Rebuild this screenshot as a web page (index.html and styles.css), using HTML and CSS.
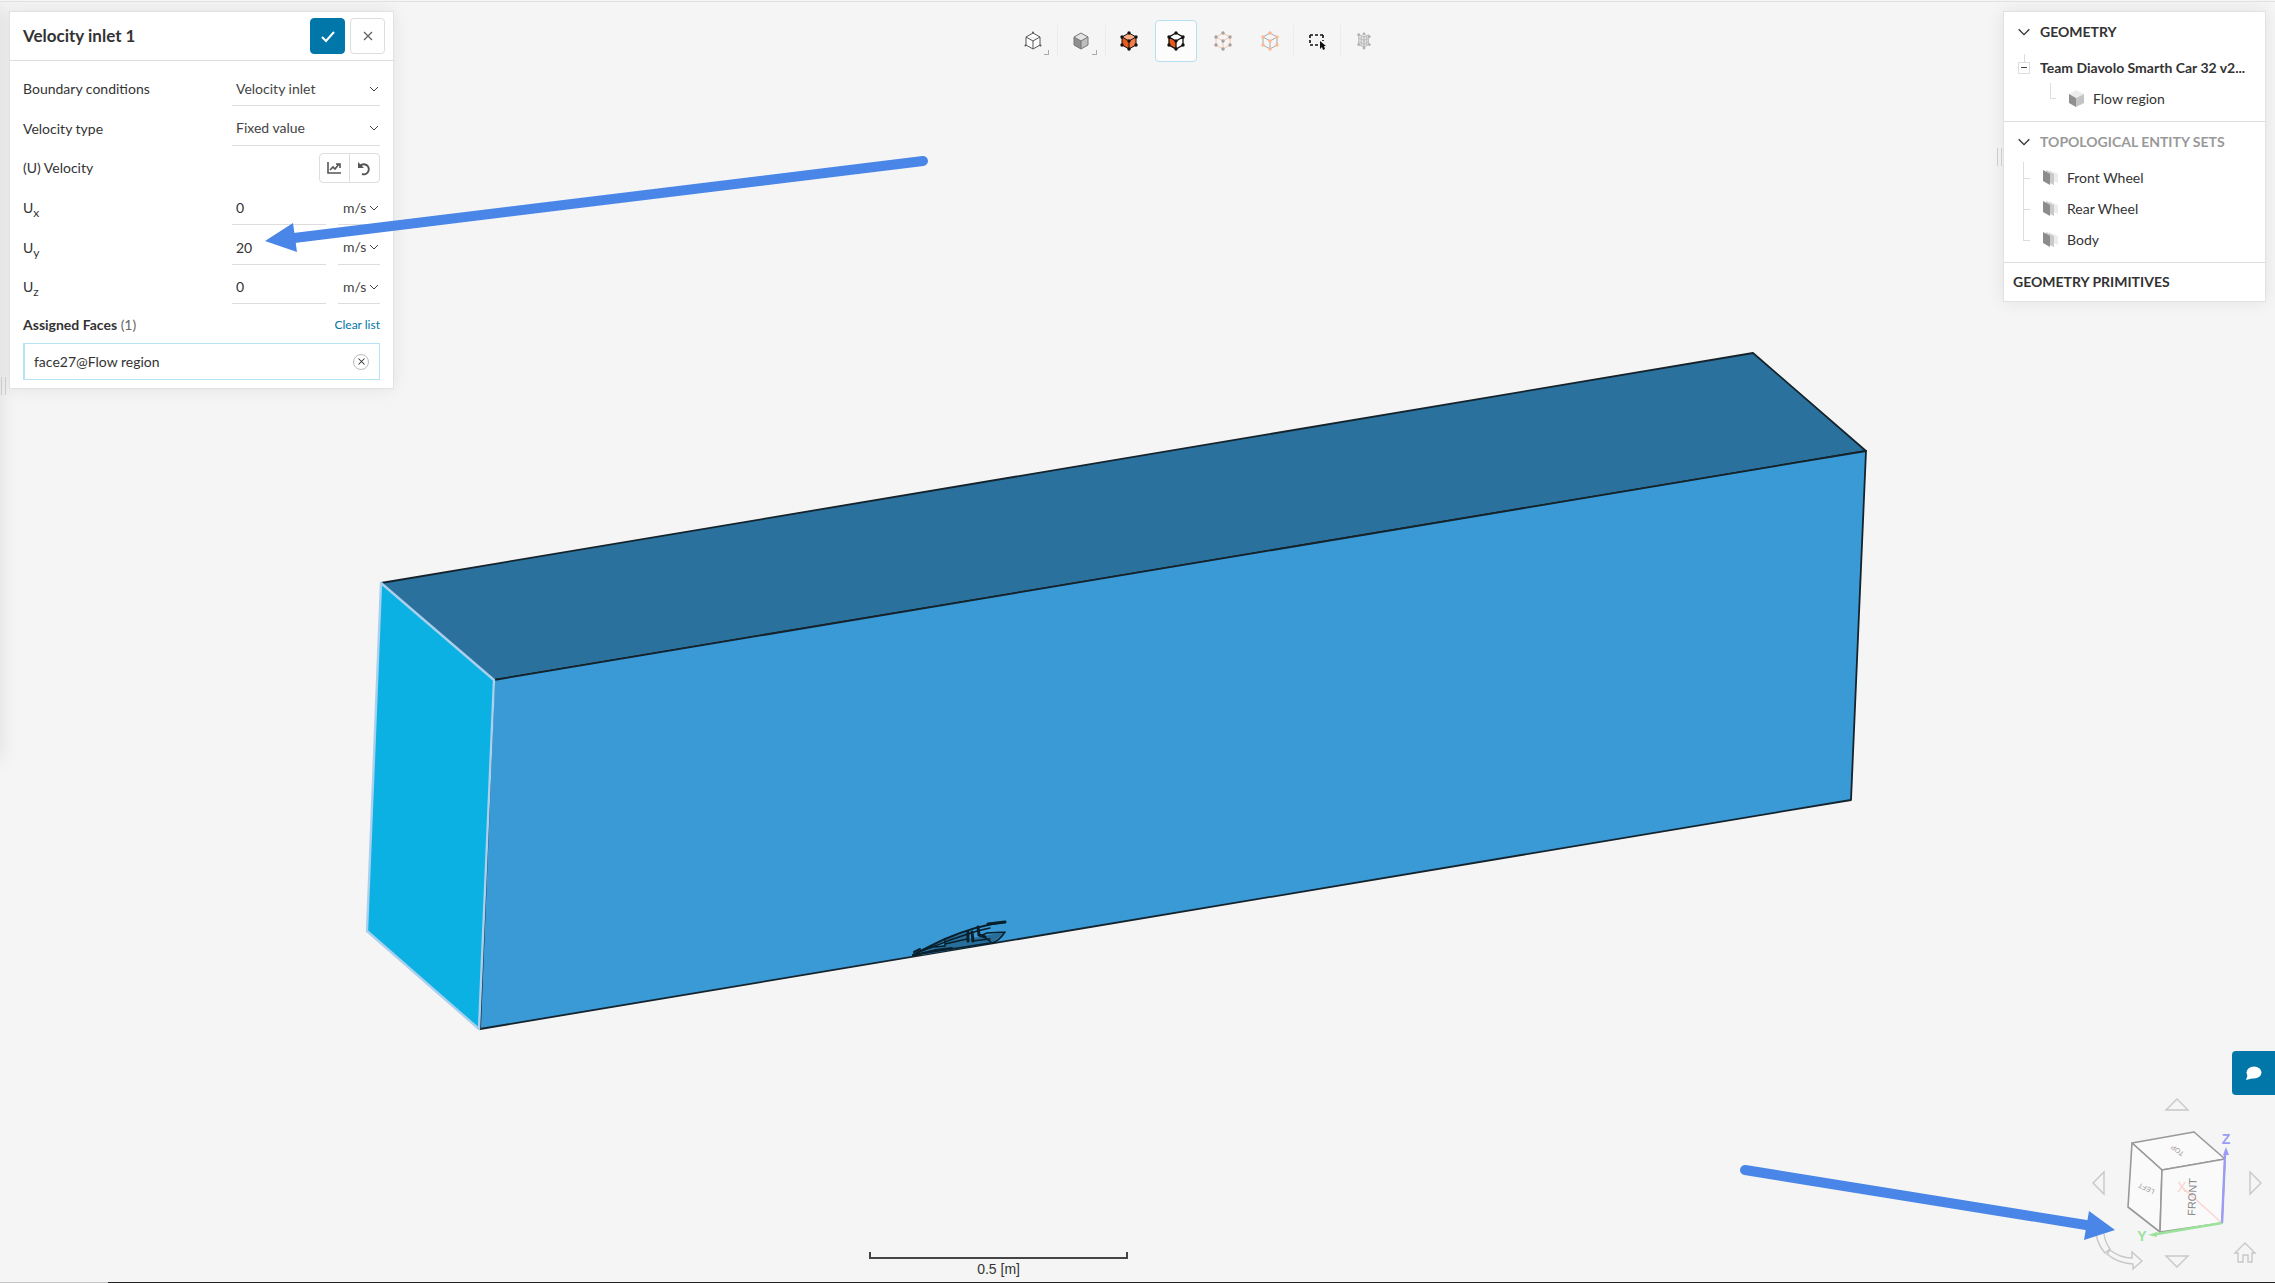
FILE: index.html
```html
<!DOCTYPE html>
<html lang="en">
<head>
<meta charset="utf-8">
<title>Velocity inlet 1</title>
<meta name="viewport" content="width=device-width, initial-scale=1">
<link rel="stylesheet" href="styles.css">
</head>
<body>
<svg class="symbols" aria-hidden="true">
  <symbol id="chevron" viewBox="0 0 12 12"><path d="M2 4l4 4 4-4" fill="none" stroke="currentColor"/></symbol>
  <symbol id="cross" viewBox="0 0 12 12"><path d="M2 2l8 8M10 2l-8 8" fill="none" stroke="currentColor" stroke-width="1.4"/></symbol>
  <symbol id="faces" viewBox="0 0 17 17"><path d="M7 1l9 4v9l-9-4z" fill="#ececec"/><path d="M4 1l8 4v11l-8-4z" fill="#c9c9c9"/><path d="M1 1l7 4v11l-7-4z" fill="#8c8c8c"/></symbol>
</svg>
<main class="workspace">
  <svg class="scene" viewBox="0 0 2275 1283" preserveAspectRatio="xMidYMid slice" role="img" aria-label="Flow region model">
    <g stroke="#14232c" stroke-width="1.8" stroke-linejoin="round">
      <path d="M381 583L1753 353l113 98L494 680z" fill="#2b719d"/>
      <path d="M494 680L1866 451l-15 349L480 1029z" fill="#3a9ad6"/>
    </g>
    <path d="M381 583l113 97-15 349-112-98z" fill="#0bb1e3" stroke="#a9d0ee" stroke-width="2.4" stroke-linejoin="round"/>
    <g stroke="#081f2c" fill="none" stroke-linecap="round">
      <path d="M915 955L945 944l22-5 38-7-13 11-70 12zM946 939l21-7 2 8-23 5z" fill="#286e9b" stroke="none"/>
      <path d="M913 955Q932 945 945 939Q978 925 1005 922" stroke-width="2"/>
      <path d="M988 924l17-2" stroke-width="3"/>
      <path d="M930 948L950 940L977 931L990 928" stroke-width="1.5"/>
      <path d="M913 955L990 943M1005 932Q999 941 992 943L986 938M1005 932L987 933L980 936M972 941L990 939" stroke-width="1.6"/>
      <path d="M968 932v9M972 932l1 9M978 927l1 8 6 2" stroke-width="3"/>
      <path d="M945 939v7l-10 1M945 944l22-5M922 951l14-5" stroke-width="1.5"/>
      <path d="M914 952l6-3M914 955l22-5 16-2" stroke-width="2"/>
    </g>
  </svg>

  <div class="top">
    <form class="panel settings" aria-label="Velocity inlet 1">
      <header class="settings-head">
        <h1>Velocity inlet 1</h1>
        <button class="square primary" type="button" aria-label="Apply"><svg width="17" height="17" viewBox="0 0 17 17"><path d="M3 9l4 4 8-9" fill="none" stroke="#fff" stroke-width="2"/></svg></button>
        <button class="square" type="button" aria-label="Close"><svg width="12" height="12"><use href="#cross"/></svg></button>
      </header>
      <div class="settings-body">
        <div class="row">
          <label for="bc">Boundary conditions</label>
          <span class="pick wide"><select id="bc"><option>Velocity inlet</option></select><svg width="12" height="12"><use href="#chevron"/></svg></span>
        </div>
        <div class="row">
          <label for="vt">Velocity type</label>
          <span class="pick wide"><select id="vt"><option>Fixed value</option></select><svg width="12" height="12"><use href="#chevron"/></svg></span>
        </div>
        <div class="row">
          <span class="grow">(U) Velocity</span>
          <span class="pair">
            <button type="button" aria-label="Plot"><svg width="15" height="14" viewBox="0 0 15 14"><path d="M1 1v11h13M3 9l3-3 2 2 4-5M9 3h4v4" fill="none" stroke="#555" stroke-width="1.6"/></svg></button>
            <button type="button" aria-label="Reset"><svg width="15" height="15" viewBox="0 0 15 15"><path d="M3 5a5 5 0 1 1 2 8" fill="none" stroke="#555" stroke-width="2"/><path d="M1 1v6h6z" fill="#555"/></svg></button>
          </span>
        </div>
        <div class="row">
          <label for="ux">U<sub>x</sub></label>
          <input class="value" id="ux" type="text" value="0">
          <span class="pick unit"><select aria-label="Unit of Ux"><option>m/s</option></select><svg width="12" height="12"><use href="#chevron"/></svg></span>
        </div>
        <div class="row">
          <label for="uy">U<sub>y</sub></label>
          <input class="value" id="uy" type="text" value="20">
          <span class="pick unit"><select aria-label="Unit of Uy"><option>m/s</option></select><svg width="12" height="12"><use href="#chevron"/></svg></span>
        </div>
        <div class="row">
          <label for="uz">U<sub>z</sub></label>
          <input class="value" id="uz" type="text" value="0">
          <span class="pick unit"><select aria-label="Unit of Uz"><option>m/s</option></select><svg width="12" height="12"><use href="#chevron"/></svg></span>
        </div>
        <div class="row assigned">
          <span class="grow"><b>Assigned Faces</b> <span class="count">(1)</span></span>
          <a class="clear" href="#">Clear list</a>
        </div>
        <div class="face">
          <span>face27@Flow region</span>
          <button type="button" aria-label="Remove face27"><svg width="9" height="9"><use href="#cross"/></svg></button>
        </div>
      </div>
    </form>

    <div class="toolbar" role="toolbar" aria-label="View and selection">
      <button class="tool menu" type="button" aria-label="Render mode"><svg width="18" height="20" viewBox="0 0 18 20"><path d="M9 2l7 4v8l-7 4-7-4V6zM2 6l7 4 7-4M9 10v8" fill="#fff" stroke="#555"/><g fill="#555"><circle cx="9" cy="1.500" r="1"/><circle cx="1.500" cy="14.500" r="1"/><circle cx="16.500" cy="14.500" r="1"/></g></svg></button>
      <button class="tool menu ruled" type="button" aria-label="Shading"><svg width="18" height="20" viewBox="0 0 18 20"><path d="M9 2l7 4-7 4-7-4z" fill="#e3e3e3"/><path d="M2 6l7 4v8l-7-4z" fill="#8f8f8f"/><path d="M16 6l-7 4v8l7-4z" fill="#bdbdbd"/><path d="M9 2l7 4v8l-7 4-7-4V6zM2 6l7 4 7-4M9 10v8" fill="none" stroke="#777"/></svg></button>
      <button class="tool ruled" type="button" aria-label="Select volumes"><svg width="18" height="20" viewBox="0 0 18 20"><path d="M9 2l7 4-7 4-7-4z" fill="#ffab85"/><path d="M2 6l7 4v8l-7-4z" fill="#e8591c"/><path d="M16 6l-7 4v8l7-4z" fill="#f57c45"/><path d="M9 2l7 4v8l-7 4-7-4V6zM2 6l7 4 7-4M9 10v8" fill="none" stroke="#111"/><g fill="#111"><circle cx="9" cy="2" r="1.700"/><circle cx="2" cy="6" r="1.700"/><circle cx="16" cy="6" r="1.700"/><circle cx="9" cy="10" r="1.700"/><circle cx="2" cy="14" r="1.700"/><circle cx="16" cy="14" r="1.700"/><circle cx="9" cy="18" r="1.700"/></g></svg></button>
      <button class="tool active" type="button" aria-label="Select faces" aria-pressed="true"><svg width="18" height="20" viewBox="0 0 18 20"><path d="M2 6l7 4v8l-7-4z" fill="#e8591c"/><path d="M9 2l7 4v8l-7 4-7-4V6zM2 6l7 4 7-4M9 10v8" fill="none" stroke="#111" stroke-width="1.300"/><g fill="#111"><circle cx="9" cy="2" r="1.700"/><circle cx="2" cy="6" r="1.700"/><circle cx="16" cy="6" r="1.700"/><circle cx="9" cy="10" r="1.700"/><circle cx="2" cy="14" r="1.700"/><circle cx="16" cy="14" r="1.700"/><circle cx="9" cy="18" r="1.700"/></g></svg></button>
      <button class="tool" type="button" aria-label="Select edges"><svg width="18" height="20" viewBox="0 0 18 20"><path d="M9 2l7 4v8l-7 4-7-4V6zM2 6l7 4 7-4M9 10v8" fill="none" stroke="#f8c3aa"/><g fill="#a5a09e"><circle cx="9" cy="2" r="1.700"/><circle cx="2" cy="6" r="1.700"/><circle cx="16" cy="6" r="1.700"/><circle cx="9" cy="10" r="1.700"/><circle cx="2" cy="14" r="1.700"/><circle cx="16" cy="14" r="1.700"/><circle cx="9" cy="18" r="1.700"/></g></svg></button>
      <button class="tool" type="button" aria-label="Select vertices"><svg width="18" height="20" viewBox="0 0 18 20"><path d="M9 2l7 4v8l-7 4-7-4V6zM2 6l7 4 7-4M9 10v8" fill="none" stroke="#aaa"/><g fill="#fbb897"><circle cx="9" cy="2" r="1.700"/><circle cx="2" cy="6" r="1.700"/><circle cx="16" cy="6" r="1.700"/><circle cx="9" cy="10" r="1.700"/><circle cx="2" cy="14" r="1.700"/><circle cx="16" cy="14" r="1.700"/><circle cx="9" cy="18" r="1.700"/></g></svg></button>
      <button class="tool ruled" type="button" aria-label="Box selection"><svg width="18" height="20" viewBox="0 0 18 20"><path d="M2 4h13M2 14h8M2 4v10M15 4v6" fill="none" stroke="#111" stroke-width="1.600" stroke-dasharray="3 2"/><path d="M12 10v8l2-2 1 3 2-1-1-3h2z" fill="#111"/></svg></button>
      <button class="tool ruled" type="button" aria-label="Mesh selection"><svg width="16" height="18" viewBox="0 0 18 20"><path d="M3 3l6 2v12l-6-3zM9 5l5-2v11l-5 3zM3 7l6 2 5-2M3 11l6 2 5-2M6 4v11M12 4v11" fill="#e2e2e2" stroke="#b8b8b8"/><g fill="#b0b0b0"><circle cx="3" cy="3" r="1.600"/><circle cx="9" cy="2" r="1.600"/><circle cx="15" cy="5" r="1.600"/><circle cx="3" cy="14" r="1.600"/><circle cx="9" cy="18" r="1.600"/><circle cx="15" cy="14" r="1.600"/></g></svg></button>
    </div>

    <aside class="panel tree">
      <section>
        <h2><svg width="16" height="16"><use href="#chevron"/></svg>GEOMETRY</h2>
        <div class="node model"><span class="toggle"></span><b>Team Diavolo Smarth Car 32 v2...</b></div>
        <div class="node region"><span class="elbow"></span><svg width="17" height="19" viewBox="0 0 17 19"><path d="M8 1l8 4-8 4-7-4z" fill="#ececec"/><path d="M1 5l7 4v9l-7-4z" fill="#8f8f8f"/><path d="M16 5L8 9v9l8-4z" fill="#c4c4c4"/></svg>Flow region</div>
      </section>
      <section>
        <h2 class="muted"><svg width="16" height="16"><use href="#chevron"/></svg>TOPOLOGICAL ENTITY SETS</h2>
        <ul>
          <li class="node"><svg width="17" height="17"><use href="#faces"/></svg>Front Wheel</li>
          <li class="node"><svg width="17" height="17"><use href="#faces"/></svg>Rear Wheel</li>
          <li class="node"><svg width="17" height="17"><use href="#faces"/></svg>Body</li>
        </ul>
      </section>
      <section class="last"><h2>GEOMETRY PRIMITIVES</h2></section>
    </aside>
  </div>

  <span class="grip grip-left"></span>
  <span class="grip grip-right"></span>

  <div class="bottom">
    <div class="scale"><span class="bar"></span><span>0.5 [m]</span></div>
    <div class="corner">
      <button class="chat" type="button" aria-label="Chat"><svg width="17" height="15" viewBox="0 0 17 15"><ellipse cx="9" cy="6.500" rx="7.500" ry="6" fill="#fff"/><path d="M3 8l-2 6 8-2z" fill="#fff"/></svg></button>
      <svg class="navigator" width="175" height="175" viewBox="2092 1097 175 175" role="img" aria-label="View orientation">
        <g fill="#fafafa" stroke="#999" stroke-width="1.600" stroke-linejoin="round">
          <path d="M2132 1143l62-11 31 27-63 11z"/><path d="M2132 1143l30 27-2 62-32-25z"/><path d="M2162 1170l63-11-3 64-62 9z"/>
        </g>
        <path d="M2222 1223l-38-34" stroke="#fbd5d3" stroke-width="1.500"/>
        <path d="M2222 1223l3-68" stroke="#9c9cf5" stroke-width="2.400"/><path d="M2226 1147l-3 8h6z" fill="#9c9cf5"/>
        <path d="M2222 1223l-65 11" stroke="#9be39b" stroke-width="2.400"/><path d="M2148 1235l9-3v5z" fill="#9be39b"/>
        <g class="axis"><text x="2226" y="1144" fill="#9c9cf5">Z</text><text x="2142" y="1241" fill="#9be39b">Y</text></g>
        <g class="side"><text class="front" transform="translate(2192 1197) rotate(-88)" y="4">FRONT</text><text transform="translate(2177 1151) rotate(216)" y="3">TOP</text><text transform="translate(2146 1189) rotate(205)" y="3">LEFT</text></g>
        <text class="far" x="2182" y="1192">X</text>
        <g fill="none" stroke="#c8c8c8" stroke-width="1.400">
          <path d="M2166 1110l11-11 11 11zM2166 1256l11 11 11-11zM2104 1172v22l-11-11zM2250 1172v22l11-11z"/>
          <path d="M2096 1234q2 11 9 19l5-4q-5-7-6-15M2110 1250q10 8 22 8v-6l10 9-9 8v-5q-16-1-26-10zM2235 1253l10-10 10 10h-3v9h-4v-7h-5v7h-5v-9z"/>
        </g>
      </svg>
    </div>
  </div>

  <svg class="scene notes" viewBox="0 0 2275 1283" preserveAspectRatio="xMidYMid slice" aria-hidden="true">
    <g fill="#4a86e8" stroke="#4a86e8">
      <path d="M923 161L294 238M1745 1170l341 55" stroke-width="10" stroke-linecap="round"/>
      <path d="M265 241l28-18 4 29zM2115 1230l-26-19-5 29z" stroke="none"/>
    </g>
  </svg>
</main>
</body>
</html>
```

FILE: styles.css
```css
* { box-sizing: border-box; }
body { margin: 0; padding-top: 1px; background: #f5f5f5; color: #333; font: 14px/20px Lato, "Liberation Sans", sans-serif; }
h1, h2, ul { margin: 0; padding: 0; font-size: inherit; }
button, select, input { margin: 0; padding: 0; border: 0; background: none; color: inherit; font: inherit; }
button { display: flex; align-items: center; justify-content: center; }
svg { flex: none; }
.symbols { position: absolute; width: 0; height: 0; }

.workspace { position: relative; display: flex; flex-direction: column; justify-content: space-between; min-height: calc(100vh - 1px); overflow: hidden; border-top: 1px solid #dfe2e3; }
.workspace::before { content: ""; position: absolute; left: -20px; top: 0; width: 20px; height: 758px; box-shadow: 0 0 20px rgba(0, 0, 0, .1); }
.workspace::after { content: ""; position: absolute; left: 0; right: 0; bottom: 0; height: 1px; background: linear-gradient(90deg, #c4c4c4 108px, #222 108px); }
.scene { position: absolute; left: 0; top: -2px; width: 100%; height: 100vh; }
.notes { pointer-events: none; }

.top { position: relative; display: flex; justify-content: space-between; align-items: flex-start; padding: 9px 9px 0; }
.panel { background: #fff; border: 1px solid #e2e2e2; box-shadow: 0 0 16px rgba(0, 0, 0, .08); }
.settings { width: 385px; }
.settings-head { display: flex; align-items: center; gap: 5px; height: 49px; padding: 0 8px 0 13px; border-bottom: 1px solid #ddd; }
.settings-head h1 { flex: 1; font-size: 17px; font-weight: 700; }
.square { width: 35px; height: 36px; border: 1px solid #ddd; border-radius: 4px; color: #666; }
.primary { border-color: #0076a9; background: #0076a9; }
.settings-body { padding: 8px 13px; }
.row { display: flex; align-items: center; height: 40px; }
.row label, .grow { flex: 1; }
.row:nth-child(3n+2) { height: 39px; }
.settings-body .assigned { height: 36px; }
sub { font-size: 12px; line-height: 0; }
.pick { display: flex; align-items: center; height: 34px; border-bottom: 1px solid #ddd; color: #444; }
.pick select { flex: 1; min-width: 0; appearance: none; }
.wide { width: 148px; padding-left: 4px; }
.unit { width: 42px; margin-left: 12px; padding-left: 5px; }
.value { width: 94px; height: 34px; padding-left: 4px; border-bottom: 1px solid #ddd; }
.pair { display: flex; height: 30px; border: 1px solid #ddd; border-radius: 4px; }
.pair button { width: 29px; }
.pair button + button { width: 30px; border-left: 1px solid #ddd; }
.count { color: #666; }
.clear { color: #0076a9; font-size: 12px; text-decoration: none; }
.face { display: flex; align-items: center; justify-content: space-between; height: 37px; padding: 0 10px 0 9px; border: 1px solid #b5e4f5; border-left-width: 2px; }
.face button { width: 16px; height: 16px; border: 1px solid #bbb; border-radius: 50%; }

.toolbar { display: flex; align-items: center; gap: 5px; padding: 9px 12px; }
.tool { position: relative; width: 42px; height: 42px; border: 1px solid transparent; border-radius: 4px; }
.active { border-color: #b5e1f2; background: #fcfcfc; }
.menu { margin-right: 1px; }
.menu::after { content: ""; position: absolute; right: 4px; bottom: 6px; width: 4px; height: 4px; border: solid #aaa; border-width: 0 1px 1px 0; }
.ruled::before { content: ""; position: absolute; left: -4px; top: 4px; width: 1px; height: 32px; background: #ececec; }

.tree { width: 263px; }
.tree section { padding: 5px 8px 7px 12px; border-bottom: 1px solid #ddd; }
.tree h2 { display: flex; align-items: center; gap: 8px; height: 30px; margin-bottom: 5px; font-weight: 700; }
.tree .muted { color: #999; }
.tree h2 svg { color: #333; }
.node { position: relative; display: flex; align-items: center; gap: 8px; height: 31px; }
.tree .last { padding: 4px 9px; border: 0; }
.tree .last h2 { margin: 0; }
.toggle { position: relative; width: 12px; height: 12px; margin: 0 2px; border: 1px solid #ddd; }
.toggle::before { content: ""; position: absolute; left: 2px; top: 4px; width: 6px; height: 1px; background: #444; }
.toggle::after { content: ""; position: absolute; left: 5px; top: -9px; width: 1px; height: 8px; background: #ddd; }
.region { padding-left: 34px; }
.elbow { align-self: flex-start; width: 6px; height: 16px; margin-right: 4px; border: solid #ddd; border-width: 0 0 1px 1px; }
.tree ul { list-style: none; margin-left: 7px; }
.tree li { padding-left: 19px; }
.tree li::before { content: ""; position: absolute; left: 0; top: 0; width: 6px; height: 16px; border: solid #ddd; border-width: 0 0 1px 1px; }
.tree li + li::after { content: ""; position: absolute; left: 0; top: -16px; width: 1px; height: 16px; background: #ddd; }

.grip { position: absolute; width: 5px; height: 18px; border: solid #ccc; border-width: 0 1px; }
.grip-left { left: 1px; top: 375px; }
.grip-right { right: 273px; top: 146px; }

.bottom { position: relative; display: flex; align-items: flex-end; justify-content: flex-end; }
.scale { position: absolute; left: 38.2%; bottom: 4px; width: 259px; text-align: center; font-family: "Liberation Sans", sans-serif; }
.bar { display: block; height: 7px; border: 2px solid #444; border-top: 0; }
.corner { display: flex; flex-direction: column; align-items: flex-end; gap: 2px; padding-bottom: 11px; }
.chat { width: 43px; height: 44px; border-radius: 4px 0 0 4px; background: #0076a9; }
.navigator { margin-right: 8px; }
.navigator text { text-anchor: middle; font-family: "Liberation Sans", sans-serif; }
.axis text, .navigator .far { font-size: 14px; font-weight: 700; }
.navigator .far { fill: #fbd0ce; font-weight: 400; }
.side text { font-size: 7px; fill: #999; }
.side .front { font-size: 11px; fill: #888; }
```
